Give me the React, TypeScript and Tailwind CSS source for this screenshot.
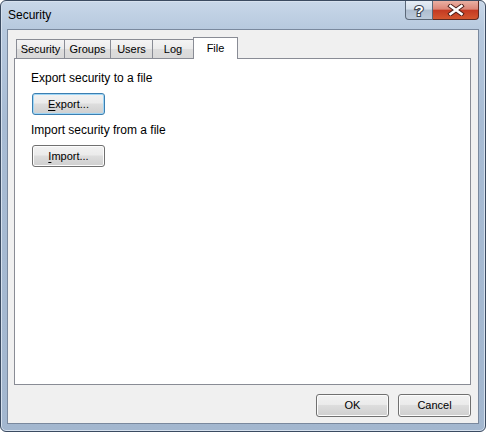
import React from 'react';

const font = { fontFamily: '"Liberation Sans", Arial, sans-serif' };

const tabs = [
    { label: 'Security', w: 'w-[49px]' },
    { label: 'Groups', w: 'w-[47px]' },
    { label: 'Users', w: 'w-[43px]' },
    { label: 'Log', w: 'w-[42px]' },
];

const WinButton = ({
    children,
    focused = false,
    className = '',
}: {
    children: React.ReactNode;
    focused?: boolean;
    className?: string;
}) => (
    <button
        className={
            'w-[73px] rounded-[3px] border text-[11px] leading-none text-black bg-[linear-gradient(to_bottom,#f2f2f2_0%,#ebebeb_45%,#dddddd_50%,#cfcfcf_100%)] ' +
            (focused
                ? 'border-[#3c7fb1] shadow-[inset_0_0_0_1px_#9fd6f6] '
                : 'border-[#707070] shadow-[inset_0_0_0_1px_#fcfcfc] ') +
            className
        }
    >
        {children}
    </button>
);

const App = () => {
    return (
        <div className="w-[486px] h-[432px] bg-white" style={font}>
            <div className="w-[486px] h-[432px] rounded-[6px] border border-[#3b4b61] bg-[linear-gradient(to_bottom,#c8d7e9_0px,#b7c9de_28px,#a8bcd4_120px,#a3b7cf_100%)] shadow-[inset_0_0_0_1px_#d6e1ee] flex flex-col px-[6px] pb-[7px]">
                {/* title bar */}
                <div className="h-[28px] flex items-start justify-between">
                    <div className="pl-[1px] mt-[7px] text-[12px] leading-[15px] text-black">
                        Security
                    </div>
                    <div className="flex">
                        <div className="w-[28px] h-[19px] border border-t-0 border-[#5b6878] rounded-bl-[4px] bg-[linear-gradient(to_bottom,#e6edf5_0%,#d3deea_45%,#aebdcf_50%,#bccadb_100%)] flex items-center justify-center">
                            <svg width="14" height="15" viewBox="0 0 14 15">
                                <text
                                    x="7"
                                    y="13"
                                    textAnchor="middle"
                                    fontSize="15"
                                    fontWeight="bold"
                                    fontFamily="Liberation Sans, Arial, sans-serif"
                                    fill="#ffffff"
                                    stroke="#3c4654"
                                    strokeWidth="2.2"
                                    paintOrder="stroke"
                                >
                                    ?
                                </text>
                            </svg>
                        </div>
                        <div className="w-[46px] h-[19px] border border-t-0 border-l-0 border-[#5e2a22] rounded-br-[4px] bg-[linear-gradient(to_bottom,#eab0a3_0%,#dc8677_45%,#c43a22_52%,#d4572f_100%)] flex items-center justify-center">
                            <svg width="18" height="12" viewBox="0 0 18 12">
                                <path
                                    d="M3.5 2 L14.5 10 M14.5 2 L3.5 10"
                                    stroke="#4a1d17"
                                    strokeWidth="4.4"
                                    strokeLinecap="square"
                                />
                                <path
                                    d="M3.5 2 L14.5 10 M14.5 2 L3.5 10"
                                    stroke="#ffffff"
                                    strokeWidth="2.6"
                                    strokeLinecap="square"
                                />
                            </svg>
                        </div>
                    </div>
                </div>

                {/* client area */}
                <div className="flex-1 border border-[#7a899e] bg-[#f0f0f0] flex flex-col pt-[7px] pl-[6px] pr-[7px] pb-[6px]">
                    <div className="h-[21px] flex items-end pl-[2px]">
                        {tabs.map((t, i) => (
                            <div
                                key={t.label}
                                className={
                                    'h-[19px] border border-b-0 border-[#898c95] text-[11px] leading-none text-black flex items-center justify-center pt-[1px] bg-[linear-gradient(to_bottom,#f4f4f4_0%,#ebebeb_50%,#dddddd_51%,#d9d9d9_100%)] ' +
                                    t.w +
                                    (i > 0 ? ' -ml-px' : '')
                                }
                            >
                                {t.label}
                            </div>
                        ))}
                        <div className="relative z-10 -ml-px -mb-px w-[45px] h-[22px] border border-b-0 border-[#898c95] bg-white text-[11px] leading-none text-black flex justify-center pt-[5px]">
                            File
                        </div>
                    </div>

                    <div className="flex-1 border border-[#898c95] bg-white flex flex-col items-start pt-[13px] pl-[16px] text-black">
                        <div className="text-[12px] leading-[13px]">Export security to a file</div>
                        <WinButton focused className="mt-[8px] ml-px h-[22px]">
                            <u className="underline-offset-2">E</u>xport...
                        </WinButton>
                        <div className="mt-[9px] text-[12px] leading-[13px]">Import security from a file</div>
                        <WinButton className="mt-[8px] ml-px h-[22px]">
                            <u className="underline-offset-2">I</u>mport...
                        </WinButton>
                    </div>

                    <div className="mt-[9px] flex justify-end gap-[9px]">
                        <WinButton className="h-[23px]">OK</WinButton>
                        <WinButton className="h-[23px]">Cancel</WinButton>
                    </div>
                </div>
            </div>
        </div>
    );
};

export default App;
